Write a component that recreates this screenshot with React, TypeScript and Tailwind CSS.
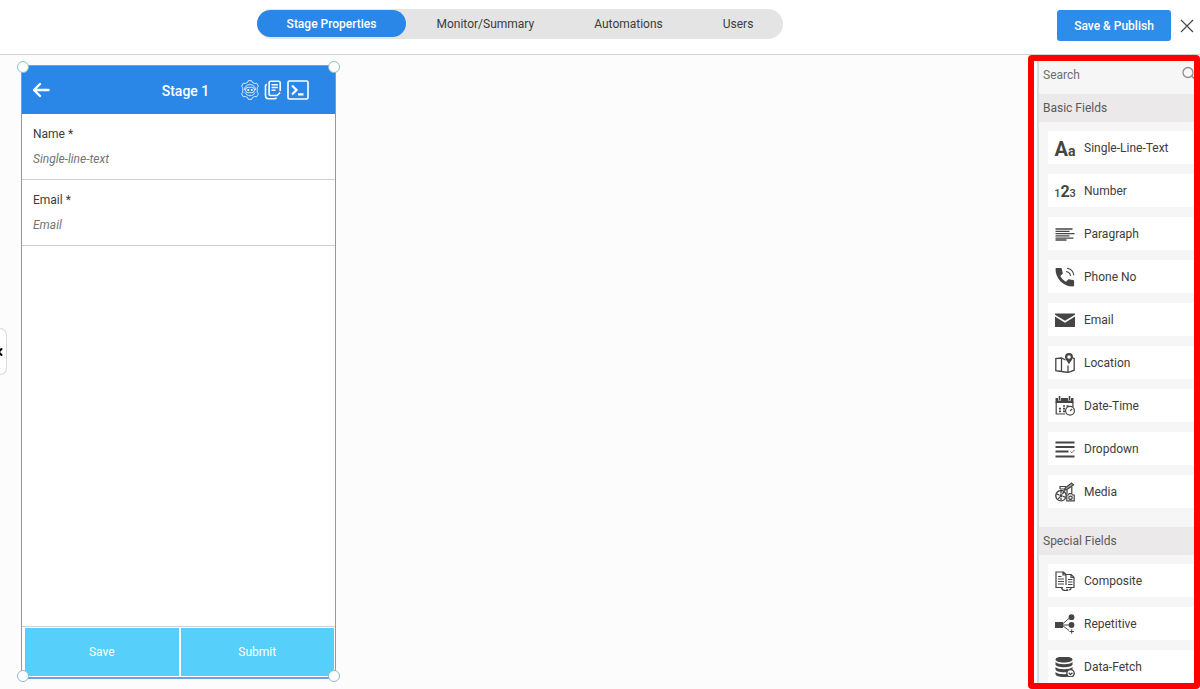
import type { ReactNode } from 'react';
import { ChevronLeft } from 'lucide-react';

type Field = { label: string; icon: ReactNode };

const TABS = ['Stage Properties', 'Monitor/Summary', 'Automations', 'Users'];

const FORM_FIELDS = [
  { id: 'name', label: 'Name *', placeholder: 'Single-line-text' },
  { id: 'email', label: 'Email *', placeholder: 'Email' },
];

const BASIC_FIELDS: Field[] = [
  { label: 'Single-Line-Text', icon: <TextIcon /> },
  { label: 'Number', icon: <NumberIcon /> },
  { label: 'Paragraph', icon: <ParagraphIcon /> },
  { label: 'Phone No', icon: <PhoneIcon /> },
  { label: 'Email', icon: <EmailIcon /> },
  { label: 'Location', icon: <LocationIcon /> },
  { label: 'Date-Time', icon: <DateIcon /> },
  { label: 'Dropdown', icon: <DropdownIcon /> },
  { label: 'Media', icon: <MediaIcon /> },
];

const SPECIAL_FIELDS: Field[] = [
  { label: 'Composite', icon: <CompositeIcon /> },
  { label: 'Repetitive', icon: <RepetitiveIcon /> },
  { label: 'Data-Fetch', icon: <DataIcon /> },
];

export default function App() {
  return (
    <div className="flex h-screen flex-col overflow-hidden bg-white font-[Roboto,sans-serif] text-xs text-[#3c3c3c]">
      <Header />
      <div className="flex min-h-0 flex-1">
        <main className="relative flex-1 bg-[#fcfcfc] py-[10px] pl-[21px]">
          <PhonePreview />
          <button
            aria-label="Expand panel"
            className="absolute top-[273px] left-0 flex h-[47px] w-[7px] items-center justify-end overflow-hidden rounded-r-lg border border-l-0 border-[#d9d9d9] bg-white text-black"
          >
            <ChevronLeft className="h-3 w-3 shrink-0" strokeWidth={4} />
          </button>
        </main>
        <FieldPanel />
      </div>
    </div>
  );
}

function Header() {
  return (
    <header className="flex h-[55px] shrink-0 border-b border-[#d2d2d2]">
      <nav className="flex flex-1 items-start justify-center pt-[9px]">
        <div className="flex h-[30px] rounded-full bg-[#e4e4e4] pt-px">
          {TABS.map((tab, i) => (
            <button
              key={tab}
              className={
                i === 0
                  ? 'h-[27px] rounded-full bg-[#2a87e8] px-[30px] font-medium text-white'
                  : 'h-[27px] px-[30px]'
              }
            >
              {tab}
            </button>
          ))}
        </div>
      </nav>
      <div className="flex w-40 items-start justify-end gap-2 pt-[10px] pr-[6px]">
        <button className="h-[31px] w-[114px] rounded-[3px] bg-[#2d8de8] font-medium text-white">
          Save &amp; Publish
        </button>
        <button aria-label="Close" className="flex h-[31px] w-[15px] items-center justify-center">
          <svg viewBox="0 0 14 14" className="h-[14px] w-[14px]" stroke="#444" strokeWidth="1.1">
            <path d="M1 1l12 12M13 1L1 13" />
          </svg>
        </button>
      </div>
    </header>
  );
}

function PhonePreview() {
  return (
    <section className="relative flex h-full w-[315px] flex-col border border-b-2 border-[#6c9fe6] bg-white">
      <div className="grid h-[48px] shrink-0 grid-cols-[1fr_auto_1fr] items-center bg-[#2a87e8] px-[10px] text-white">
        <button aria-label="Back" className="w-[18px]">
          <svg viewBox="0 0 18 16" className="h-4 w-[18px]" fill="none" stroke="currentColor" strokeWidth="2.4" strokeLinecap="round" strokeLinejoin="round">
            <path d="M8 2L2 8l6 6M2 8h14.500" />
          </svg>
        </button>
        <h1 className="pt-px pl-[14px] text-sm font-medium">Stage 1</h1>
        <div className="flex items-center justify-end gap-1 pr-4">
          <button aria-label="Automation bot"><BotIcon /></button>
          <button aria-label="Copy form"><CopyIcon /></button>
          <button aria-label="Console"><ConsoleIcon /></button>
        </div>
      </div>
      <div className="flex-1">
        {FORM_FIELDS.map((f) => (
          <div key={f.id} className="flex flex-col gap-[9px] border-b border-[#cfcfcf] px-[11px] pt-3 pb-3">
            <label htmlFor={f.id} className="leading-4">{f.label}</label>
            <input
              id={f.id}
              placeholder={f.placeholder}
              className="h-4 w-full leading-4 italic outline-none placeholder:text-[#757575]"
            />
          </div>
        ))}
      </div>
      <div className="grid grid-cols-2 gap-[2px] border-t border-[#cfcfcf] pt-px pr-px pb-px pl-[3px]">
        {['Save', 'Submit'].map((label) => (
          <button key={label} className="h-[48px] bg-[#56d0fb] text-white">{label}</button>
        ))}
      </div>
      {/* resize handles */}
      <i className="absolute -top-[5px] -left-[5px] h-3 w-3 rounded-full border border-[#8dbcc9] bg-white" />
      <i className="absolute -top-[5px] -right-[5px] h-3 w-3 rounded-full border border-[#8dbcc9] bg-white" />
      <i className="absolute -bottom-[5px] -left-[5px] h-3 w-3 rounded-full border border-[#8dbcc9] bg-white" />
      <i className="absolute -right-[5px] -bottom-[5px] h-3 w-3 rounded-full border border-[#8dbcc9] bg-white" />
    </section>
  );
}

function FieldPanel() {
  return (
    <aside className="w-[172px] shrink-0 rounded-[4px] border-6 border-[#fe0000] bg-white pl-[3px]">
      <div className="h-full overflow-hidden border-l-2 border-[#dcdcdc] bg-[#f6f6f6]">
        <div className="-mr-[2px] flex h-[33px] items-start gap-2 pt-[5px] pl-1">
          <input
            aria-label="Search"
            placeholder="Search"
            className="h-[18px] min-w-0 flex-1 outline-none placeholder:text-[#6e6e6e]"
          />
          <svg viewBox="0 0 14 14" className="h-[14px] w-[14px] shrink-0" fill="none" stroke="#8c8c8c" strokeWidth="1.3">
            <circle cx="6" cy="6.500" r="5" />
            <path d="M9.500 10l4 4" />
          </svg>
        </div>
        <FieldGroup title="Basic Fields" fields={BASIC_FIELDS} />
        <FieldGroup title="Special Fields" fields={SPECIAL_FIELDS} />
      </div>
    </aside>
  );
}

function FieldGroup({ title, fields }: { title: string; fields: Field[] }) {
  return (
    <div className="mb-[19px]">
      <h2 className="flex h-7 items-center bg-[#ebe9e9] pl-1 text-[#5a5a5a]">{title}</h2>
      <ul className="flex flex-col gap-[10px] pt-[9px] pl-[9px]">
        {fields.map((f) => (
          <li key={f.label}>
            <button className="flex h-[33px] w-full items-center gap-[9px] bg-white pl-[7px] text-left">
              <span className="flex h-5 w-5 shrink-0 items-center justify-center text-[#454545]">{f.icon}</span>
              {f.label}
            </button>
          </li>
        ))}
      </ul>
    </div>
  );
}

function Svg({ children }: { children: ReactNode }) {
  return (
    <svg viewBox="0 0 20 20" className="h-5 w-5" fill="none" stroke="currentColor" strokeWidth="1.2">
      {children}
    </svg>
  );
}

function TextIcon() {
  return (
    <span aria-hidden="true" className="flex items-baseline pt-1 font-bold">
      <span className="text-xl leading-5">A</span>
      <span className="text-sm leading-5">a</span>
    </span>
  );
}

function NumberIcon() {
  return (
    <span aria-hidden="true" className="flex items-baseline pt-1 font-bold">
      <span className="text-[11px] leading-5 font-medium">1</span>
      <span className="text-base leading-5">2</span>
      <span className="text-[11px] leading-5 font-medium">3</span>
    </span>
  );
}

function ParagraphIcon() {
  return (
    <Svg>
      <path d="M0.500 5h17M0.500 7.300h14M0.500 9.600h19M0.500 11.900h14M0.500 14.200h18M0.500 16h11" strokeWidth="1.300" />
    </Svg>
  );
}

function PhoneIcon() {
  return (
    <Svg>
      <path fill="currentColor" stroke="none" d="M1.500 1h4.200c.7 0 1.100.4 1.200 1 .1 1.400.4 2.600.8 3.700.2.500.1 1-.3 1.300L5.300 8.900c1.300 2.500 3.200 4.500 5.800 5.800l2-2.100c.4-.4.800-.4 1.300-.3 1.200.4 2.400.6 3.700.7.600.1 1 .5 1 1.200v4.100c0 .7-.4 1.200-1.100 1.200C8.300 19.500.500 11.700.500 2c0-.6.400-1 1-1z" />
      <path d="M11 4.500c2.500.3 4.200 2 4.600 4.500M12 1.300c3.700.6 6.200 3 6.900 6.800" strokeWidth="1.100" />
    </Svg>
  );
}

function EmailIcon() {
  return (
    <Svg>
      <path fill="currentColor" stroke="none" d="M0 3.500h20v1.200l-10 6-10-6z" />
      <path fill="currentColor" stroke="none" d="M0 6.500l10 6.200 10-6.200V17H0z" />
    </Svg>
  );
}

function LocationIcon() {
  return (
    <Svg>
      <path d="M10.500 7L6.500 5 .8 5.700v12l5.700.8 6.500 1 6.200-2.300V5.500L18 5.200M6.500 5v13.500M13 12.500v7" strokeWidth="1.300" />
      <path fill="currentColor" stroke="none" fillRule="evenodd" d="M14 0a4 4 0 0 1 4 4c0 2.600-2.500 4-4 7.500C12.500 8 10 6.600 10 4a4 4 0 0 1 4-4zm0 2.200a1.800 1.800 0 1 0 0 3.600 1.800 1.800 0 0 0 0-3.600z" />
    </Svg>
  );
}

function DateIcon() {
  return (
    <Svg>
      <path fill="currentColor" stroke="none" d="M0.500 2h18v5h-18z" />
      <path d="M4.500 0.500v4M14.500 0.500v4" stroke="#fff" strokeWidth="3" />
      <path d="M4.500 0v4M14.500 0v4" strokeWidth="1.600" />
      <path d="M1.200 6v12h9M17.900 6v5" />
      <path d="M8 10h2M11.500 10h2M4 12.600h2M8 12.600h2M4 15.400h2M8 15.400h2" strokeWidth="1.600" />
      <circle cx="15" cy="14.800" r="4.400" fill="#fff" />
      <path d="M15 15l2.200-2.200" />
    </Svg>
  );
}

function DropdownIcon() {
  return (
    <Svg>
      <path d="M0.500 3.500h19M0.500 8h19M0.500 12.500h13M0.500 17.500h19" strokeWidth="1.800" />
      <path d="M15.500 12.500l1.300 1.200 3-3" strokeWidth="0.800" />
    </Svg>
  );
}

function MediaIcon() {
  return (
    <Svg>
      <circle cx="6" cy="13.700" r="5.200" strokeWidth="1.400" />
      <circle cx="6" cy="13.700" r="1" fill="currentColor" />
      <path d="M6 9v2.500M6 15.800V18M1.800 12l2.300.8M7.900 14.400l2.300.8M3.300 17l1.400-2M7.300 12l1.600-2" strokeWidth="1.300" />
      <path d="M5 7V4.500h6M5 7h7" />
      <path fill="#a8a8a8" d="M10 6.300l6.500-5.300 2 2-6.800 4.600-2.300.6z" />
      <path d="M16.800 4.800v6.500M12 8v4" />
      <path fill="#fff" d="M11.800 13h1.500l.9-1.300h2.400l.9 1.300h1.700v5.800h-7.400z" />
      <circle cx="15.500" cy="15.800" r="1.700" strokeWidth="1.300" />
    </Svg>
  );
}

function CompositeIcon() {
  return (
    <Svg>
      <path d="M11 3.500L8.500 1H1v15.500h7M11 3v11M8 1v3h3M3 5.500h3.500M3 8h6M3 10.500h6M3 13h6" />
      <path d="M11 3.500h5.200L19 6.300v10.200h-8M16 3.500v3h3M13 8.500h4.500M13 11h4.500M13 13.500h4.500" />
      <path d="M6.500 17c.5 2 2 2.500 4 2.500h2.500M11.500 18l1.700 1.500M14 19c1.300 0 2-.6 2.300-2.300" />
    </Svg>
  );
}

function RepetitiveIcon() {
  return (
    <Svg>
      <path fill="currentColor" stroke="none" d="M0 8h8v6H0z" />
      <circle cx="16.500" cy="3.200" r="2.900" fill="currentColor" stroke="none" />
      <circle cx="16.500" cy="11" r="2.900" fill="currentColor" stroke="none" />
      <path d="M7.500 10L14.500 4M7.500 11h7M7.500 11.500l6.500 5M14.500 17.500h4.400M16.700 15.300v4.400" strokeWidth="1" />
    </Svg>
  );
}

function DataIcon() {
  return (
    <Svg>
      <path
        fill="currentColor"
        stroke="none"
        d="M0.500 2.500C.500.700 4.200-.500 9-.500s8.500 1.200 8.500 3S13.800 5.500 9 5.500.500 4.300.500 2.500zM.500 5c1.500 1.500 4.500 2.200 8.500 2.200s7-.7 8.500-2.200v2.500c0 1.600-3.700 2.800-8.500 2.800S.500 9.100.500 7.500zM.500 10c1.500 1.500 4.500 2.200 8.500 2.200s7-.7 8.500-2.200v2.500c0 1.600-3.700 2.800-8.500 2.800S.500 14.100.500 12.500zM.500 15c1.500 1.500 4.500 2.200 8.500 2.200s7-.7 8.500-2.200v2c0 1.800-3.700 3-8.500 3S.500 18.800.500 17z"
      />
      <circle cx="15.500" cy="16.300" r="3.700" fill="#fff" strokeWidth="1.400" />
      <path d="M13.700 15.800l1.800 1.800 1.900-1.900" strokeWidth="1.300" />
    </Svg>
  );
}

function BotIcon() {
  return (
    <svg viewBox="0 0 20 20" className="h-5 w-5" fill="none" stroke="currentColor" strokeWidth="0.800">
      <path d="M7.500 2.500L8.300.7h3.400l.8 1.800 2.200 1 2-.3 1.700 2.900-1.200 1.700v4.400l1.200 1.700-1.700 2.900-2-.3-2.200 1-.8 1.800H8.300l-.8-1.800-2.200-1-2 .3-1.700-2.900 1.200-1.700V7.800L1.600 6.100l1.700-2.900 2 .3z" />
      <path d="M4.500 10a5.500 5.500 0 0 1 11 0M5 12.500c1 2 2.800 3.200 5 3.200s4-1.200 5-3.200" />
      <rect x="5.500" y="7.300" width="9" height="5.400" rx="2.700" />
      <path d="M7.500 10h1.600M10.900 10h1.600" strokeWidth="1.800" />
    </svg>
  );
}

function CopyIcon() {
  return (
    <svg viewBox="0 0 18 20" className="h-5 w-[18px]" fill="none" stroke="currentColor" strokeWidth="1.600" strokeLinejoin="round">
      <path d="M16.200 11V2.700c0-.8-.6-1.400-1.400-1.400H6.500c-.8 0-1.400.6-1.400 1.400v11.400c0 .8.600 1.400 1.400 1.400H13l3.200-3" />
      <path d="M2.800 4.300c-.8.300-1.300.8-1.300 1.700v9.800c0 1.800 1.200 3 3 3h5.800c1 0 1.800-.4 2.200-1.200" />
      <path d="M7.500 4.800h6.300M7.500 7.500h6.300M7.500 10.200h4" strokeWidth="1.400" />
    </svg>
  );
}

function ConsoleIcon() {
  return (
    <svg viewBox="0 0 22 20" className="ml-px h-5 w-[22px]" fill="none" stroke="currentColor" strokeWidth="1.600">
      <rect x="1" y="1" width="20" height="18" rx="1.500" />
      <path d="M5 5.500L9.500 10 5 14.500M11 14.300h5.500" strokeWidth="2.200" />
    </svg>
  );
}
